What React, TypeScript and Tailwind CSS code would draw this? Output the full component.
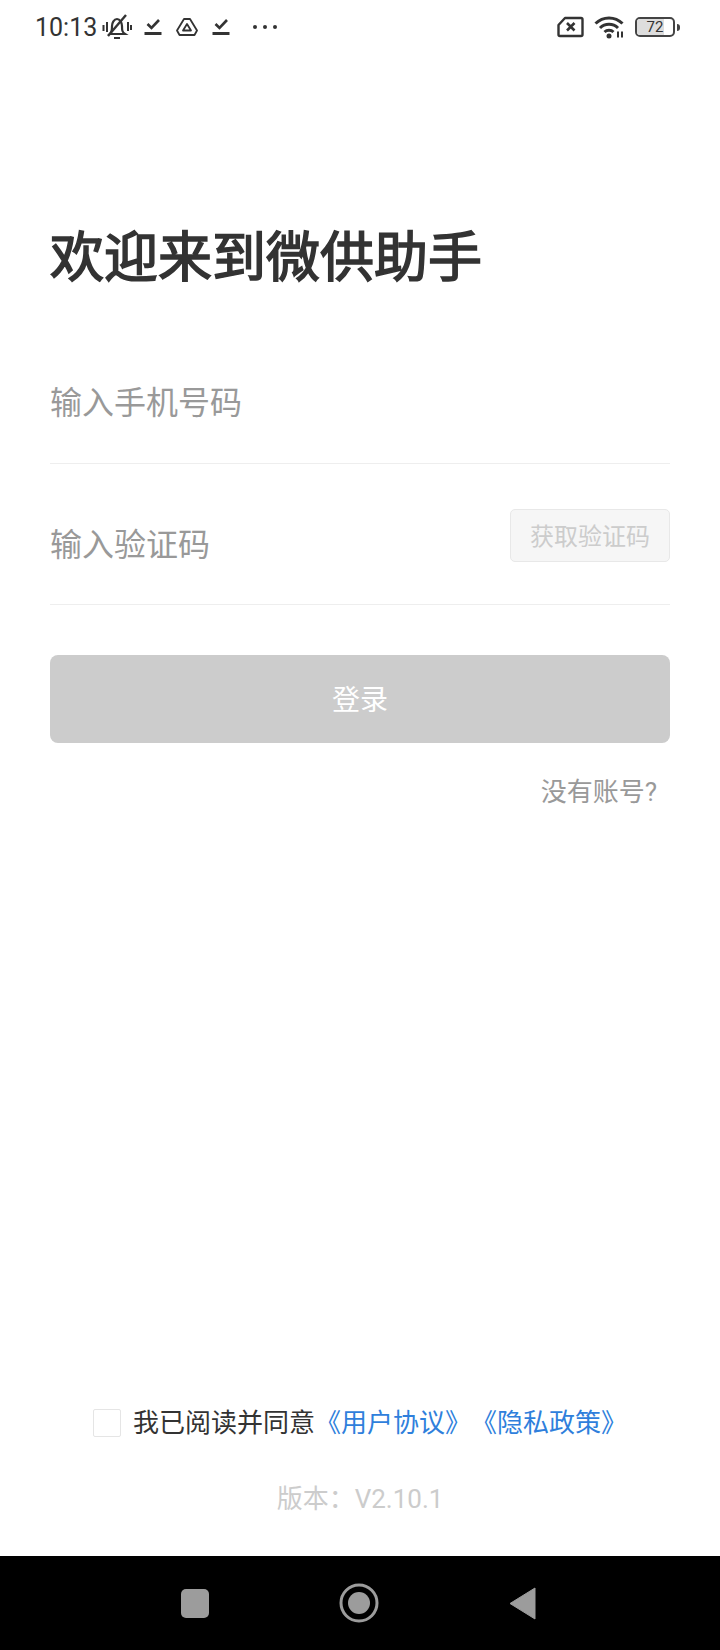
import { useState } from 'react';

const cjk = 'font-["Roboto","Noto_Sans_CJK_SC",sans-serif]';

function StatusTick() {
  return (
    <svg width="18" height="20" viewBox="0 0 18 20" fill="none" stroke="#333" className="shrink-0">
      <path d="M3.500 7l4 4L15 3" strokeWidth="2.600" />
      <path d="M0.500 16.500h17" strokeWidth="3" />
    </svg>
  );
}

function StatusBar() {
  return (
    <div className={`flex h-[54px] items-center justify-between pl-[35px] pr-[40px] text-[#333] ${cjk}`}>
      <div className="flex items-center">
        <span className="text-[25px] leading-none">10:13</span>
        <svg width="30" height="26" viewBox="0 0 30 26" fill="none" stroke="#333" strokeWidth="2.200" className="ml-[5px] shrink-0">
          <path d="M8 20c2-2 2-4 2-8 0-3 2-7 5-7s5 4 5 7c0 4 0 6 3 8z" />
          <path d="M12 24h6" strokeWidth="2" />
          <path d="M6 22L24 1" strokeWidth="2.400" />
          <path d="M1.500 11v6M5 8v10M26 8v9M29 11v5" strokeWidth="2" />
        </svg>
        <div className="ml-[12px] flex items-center">
          <StatusTick />
        </div>
        <svg width="22" height="20" viewBox="0 0 22 20" fill="none" stroke="#333" strokeWidth="1.800" className="ml-[14px] shrink-0">
          <path d="M8 2h6l7 11.500-2.500 4.500h-15L1 13.500z" strokeLinejoin="round" />
          <path d="M11 7l4 6.500H7z" strokeLinejoin="round" />
        </svg>
        <div className="ml-[14px] flex items-center">
          <StatusTick />
        </div>
        <div className="ml-[23px] flex items-center gap-[6px]">
          <span className="h-[4px] w-[4px] rounded-full bg-[#333]" />
          <span className="h-[4px] w-[4px] rounded-full bg-[#333]" />
          <span className="h-[4px] w-[4px] rounded-full bg-[#333]" />
        </div>
      </div>
      <div className="flex items-center">
        <svg width="27" height="22" viewBox="0 0 27 22" fill="none" stroke="#333" className="shrink-0">
          <path d="M8 2h16a1.500 1.500 0 0 1 1.500 1.500v15a1.500 1.500 0 0 1-1.500 1.500H3a1.500 1.500 0 0 1-1.500-1.500V9z" strokeWidth="2.400" strokeLinejoin="round" />
          <path d="M10 7l7.500 7.500M17.500 7L10 14.500" strokeWidth="2.600" />
        </svg>
        <svg width="32" height="24" viewBox="0 0 32 24" fill="none" stroke="#333" className="ml-[10px] shrink-0">
          <path d="M1.500 8.500C9 1 21 1 28.500 8.500" strokeWidth="3" />
          <path d="M6 13c5-5 13-5 18 0" strokeWidth="3" />
          <path d="M10.500 17c2.500-2.400 6.500-2.400 9 0" strokeWidth="3" />
          <circle cx="15" cy="21" r="2.500" fill="#333" stroke="none" />
          <path d="M24 16.500v6M28 16.500v6" strokeWidth="2" />
        </svg>
        <div className="relative ml-[9px] flex h-[20px] w-[40px] items-center justify-center overflow-hidden rounded-[5px] border-2 border-[#444]">
          <span className="absolute inset-y-0 left-0 w-[27px] bg-[#ddd]" />
          <span className="relative text-[15px] leading-none">72</span>
        </div>
        <span className="ml-[2px] h-[7px] w-[3px] rounded-r-sm bg-[#444]" />
      </div>
    </div>
  );
}

export default function App() {
  const [phone, setPhone] = useState('');
  const [code, setCode] = useState('');
  const [agreed, setAgreed] = useState(false);

  return (
    <div className={`flex h-[1650px] w-[720px] flex-col bg-white ${cjk}`}>
      <StatusBar />

      <div className="flex flex-1 flex-col px-[50px]">
        <h1 className="mt-[174px] text-[54px] font-normal leading-[62px] text-[#333] [-webkit-text-stroke:1.600px_#333]">欢迎来到微供助手</h1>

        <div className="mt-[70px] flex h-[104px] items-center border-b border-[#eee]">
          <input
            value={phone}
            onChange={(e) => setPhone(e.target.value)}
            placeholder="输入手机号码"
            className="mb-[17px] w-full text-[32px] text-[#333] outline-none placeholder:text-[#999]"
          />
        </div>

        <div className="flex h-[141px] items-center justify-between border-b border-[#eee]">
          <input
            value={code}
            onChange={(e) => setCode(e.target.value)}
            placeholder="输入验证码"
            className="mt-[22px] w-[300px] text-[32px] text-[#333] outline-none placeholder:text-[#999]"
          />
          <button className="mb-[-2px] flex h-[53px] w-[160px] items-center justify-center rounded-[5px] border border-[#e8e8e8] bg-[#f6f6f6] pt-[3px] text-[24px] text-[#ccc]">
            获取验证码
          </button>
        </div>

        <button className="mt-[50px] flex h-[88px] items-center justify-center rounded-[8px] bg-[#ccc] pt-[3px] text-[28px] text-white">
          登录
        </button>

        <div className="mt-[28px] pr-[13px] text-right text-[26px] leading-[42px] text-[#999]">没有账号?</div>

        <div className="mt-auto flex items-center pl-[43px]">
          <button
            onClick={() => setAgreed(!agreed)}
            className="h-[28px] w-[28px] rounded-[2px] border border-[#e5e5e5] bg-white"
          />
          <span className="ml-[12px] text-[26px] leading-[40px] text-[#333]">
            我已阅读并同意
            <span className="text-[#2f7fdc]">《用户协议》</span>
            <span className="ml-[13px] text-[#2f7fdc]">《隐私政策》</span>
          </span>
        </div>

        <div className="mb-[37px] mt-[36px] text-center text-[26px] leading-[40px] text-[#ccc]">{'版本\uFF1AV2.10.1'}</div>
      </div>

      <div className="flex h-[94px] items-center justify-between bg-black pl-[181px] pr-[184px]">
        <span className="h-[29px] w-[28px] rounded-[5px] bg-[#9c9c9c]" />
        <svg width="40" height="40" viewBox="0 0 40 40" className="shrink-0">
          <circle cx="20" cy="20" r="18" fill="none" stroke="#9c9c9c" strokeWidth="3" />
          <circle cx="20" cy="20" r="11" fill="#9c9c9c" />
        </svg>
        <svg width="27" height="33" viewBox="0 0 27 33" className="shrink-0">
          <path d="M26 1v31L1 16.500z" fill="#9c9c9c" stroke="#9c9c9c" strokeWidth="1" strokeLinejoin="round" />
        </svg>
      </div>
    </div>
  );
}
